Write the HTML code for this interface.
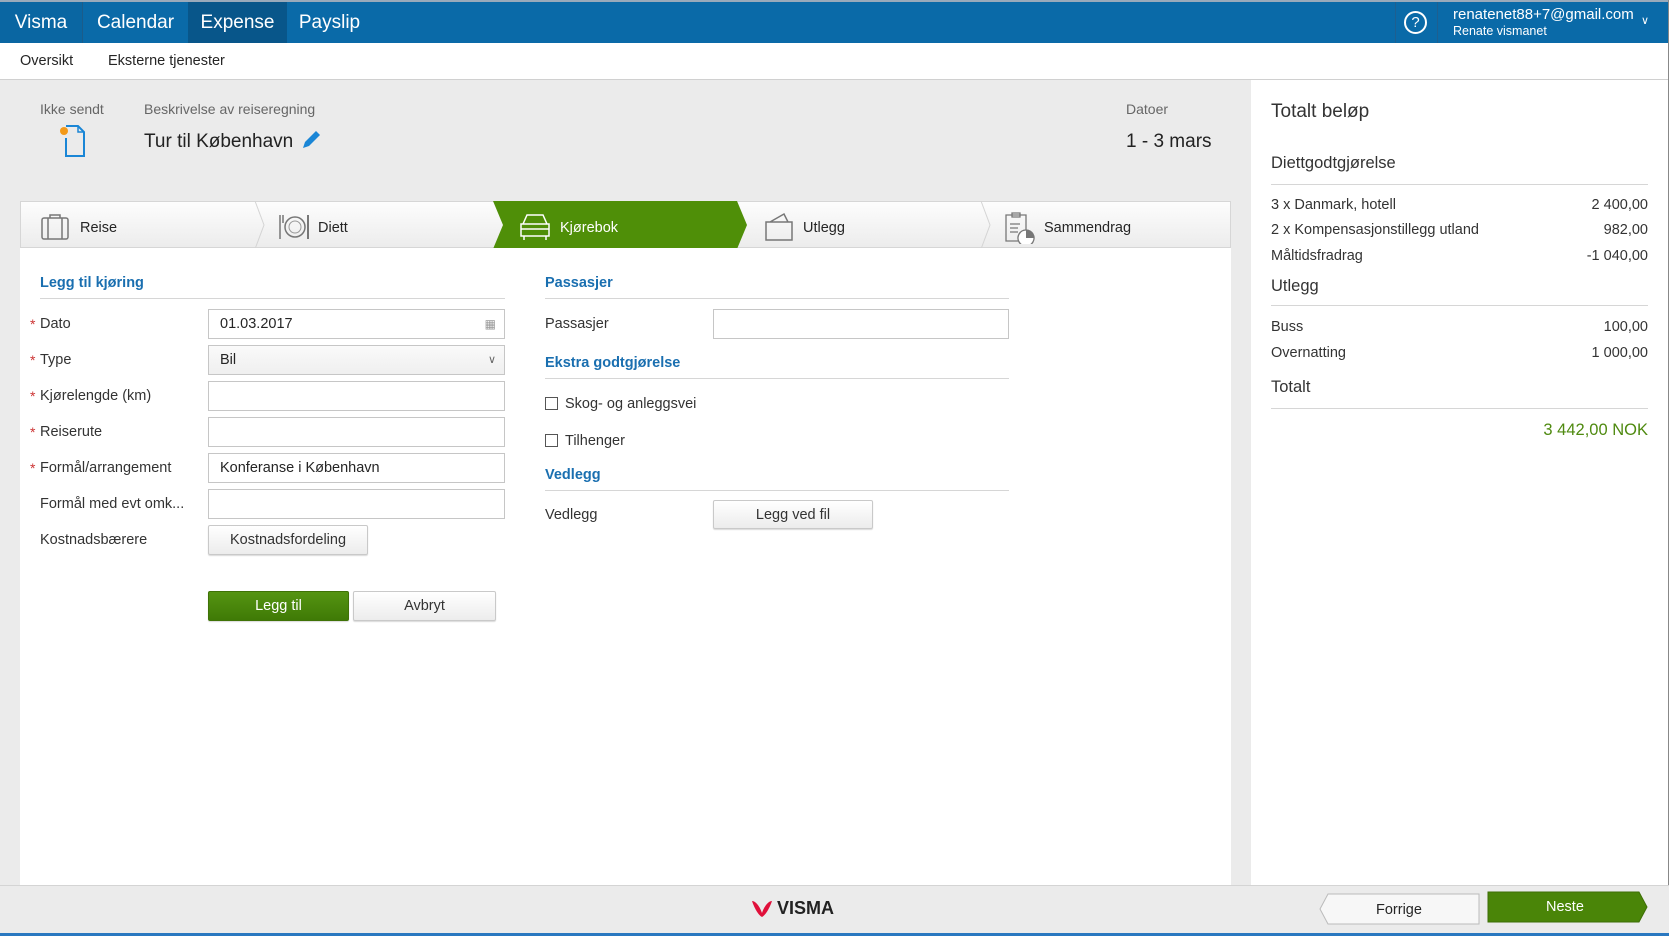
<!DOCTYPE html>
<html><head><meta charset="utf-8"><style>
*{box-sizing:border-box;margin:0;padding:0}
body{width:1669px;height:936px;overflow:hidden;background:#ebebeb;font-family:"Liberation Sans","DejaVu Sans",sans-serif;color:#252525;position:relative;font-size:14px}
.a{position:absolute;white-space:nowrap}
.top{position:absolute;left:0;top:0;width:1669px;height:43px;background:#0a6aa8;border-top:2px solid #9ab}
.top .i{position:absolute;top:0;height:41px;line-height:41px;color:#fff;font-size:19px;text-align:center}
.sub{position:absolute;left:0;top:43px;width:1669px;height:37px;background:#fff;border-bottom:1px solid #d0d0d0}
.lbl{font-size:14.5px;color:#333}
.req{color:#c33;position:absolute;left:30px}
.inp{position:absolute;left:208px;width:297px;height:30px;border:1px solid #c6c6c6;background:#fff;font-size:14.5px;padding-left:11px;line-height:28px}
.h{color:#1a6fb0;font-weight:bold;font-size:14.5px}
.line{position:absolute;height:1px;background:#d6d6d6}
.btn{position:absolute;border:1px solid #c9c9c9;border-radius:2px;background:linear-gradient(#fff,#ececec);text-align:center;font-size:14.5px;color:#333;box-shadow:0 1px 1px rgba(0,0,0,.15)}
.rp{font-size:14.5px;color:#333}
</style></head><body>
<div class="top">
 <div class="i" style="left:0;width:82px;background:#0a66a2">Visma</div>
 <div class="i" style="left:82px;width:106px;border-left:1px solid #1b5c8a">Calendar</div>
 <div class="i" style="left:188px;width:99px;background:#08568a">Expense</div>
 <div class="i" style="left:287px;width:85px">Payslip</div>
 <div style="position:absolute;left:1395px;top:0;width:1px;height:41px;background:#1e5f90"></div>
 <div style="position:absolute;left:1437px;top:0;width:1px;height:41px;background:#1e5f90"></div>
 <div style="position:absolute;left:1404px;top:9px;width:23px;height:23px;border:2px solid #fff;border-radius:50%;color:#fff;font-size:15px;text-align:center;line-height:19px">?</div>
 <div class="a" style="left:1453px;top:4px;color:#fff;font-size:15px">renatenet88+7@gmail.com</div>
 <div class="a" style="left:1453px;top:22px;color:#fff;font-size:12.5px">Renate vismanet</div>
 <div class="a" style="left:1641px;top:12px;color:#fff;font-size:11px">&#8744;</div>
</div>
<div class="sub">
 <div class="a" style="left:20px;top:10px;font-size:14.5px">Oversikt</div>
 <div class="a" style="left:108px;top:10px;font-size:14.5px">Eksterne tjenester</div>
</div>
<div class="a" style="left:40px;top:101px;font-size:14px;color:#666">Ikke sendt</div>
<svg class="a" style="left:58px;top:124px" width="30" height="34"><path d="M8 2h12l6 6v24H8V14" fill="none" stroke="#1a86d6" stroke-width="2"/><path d="M20 2v6h6" fill="none" stroke="#1a86d6" stroke-width="1.5"/><circle cx="6" cy="7" r="4" fill="#f39a1a"/></svg>
<div class="a" style="left:144px;top:101px;font-size:14px;color:#666">Beskrivelse av reiseregning</div>
<div class="a" style="left:144px;top:131px;font-size:19px;color:#222">Tur til København</div>
<svg class="a" style="left:300px;top:129px" width="22" height="22"><path d="M3 19l2-6L16 2l4 4L9 17z" fill="#1a86d6"/></svg>
<div class="a" style="left:1126px;top:101px;font-size:14px;color:#666">Datoer</div>
<div class="a" style="left:1126px;top:131px;font-size:19px;color:#222">1 - 3 mars</div>

<!-- steps -->
<div style="position:absolute;left:20px;top:201px;width:1211px;height:47px;background:linear-gradient(#fdfdfd,#ececec);border:1px solid #d6d6d6"></div>
<svg class="a" style="left:20px;top:201px" width="1211" height="48">
 <path d="M235 0l9 24-9 24" fill="none" stroke="#d4d4d4"/>
 <path d="M961 0l9 24-9 24" fill="none" stroke="#d4d4d4"/>
 <path d="M473 0h244l10 24-10 24H473l10-24z" fill="#4f8f08"/>
</svg>
<svg class="a" style="left:40px;top:213px" width="30" height="28"><rect x="2" y="5" width="26" height="21" rx="2" fill="none" stroke="#777" stroke-width="1.5"/><path d="M10 5V2h10v3M8 5v21M22 5v21" fill="none" stroke="#777" stroke-width="1.5"/></svg>
<div class="a" style="left:80px;top:220px;font-size:14.5px">Reise</div>
<svg class="a" style="left:277px;top:213px" width="34" height="28"><path d="M3 2v24M6 2v8" stroke="#777" stroke-width="1.5"/><circle cx="18" cy="14" r="10" fill="none" stroke="#777" stroke-width="1.5"/><circle cx="18" cy="14" r="6" fill="none" stroke="#999"/><path d="M31 2v24" stroke="#777" stroke-width="2"/></svg>
<div class="a" style="left:318px;top:220px;font-size:14.5px">Diett</div>
<svg class="a" style="left:518px;top:212px" width="34" height="30"><path d="M5 12l4-9h16l4 9M3 12h28v12H3zM6 24v4M28 24v4M3 17h28" fill="none" stroke="#fff" stroke-width="1.5"/></svg>
<div class="a" style="left:560px;top:220px;font-size:14.5px;color:#fff">Kjørebok</div>
<svg class="a" style="left:764px;top:212px" width="30" height="30"><path d="M2 10h26v18H2zM6 10l14-8 4 8" fill="none" stroke="#777" stroke-width="1.5"/></svg>
<div class="a" style="left:803px;top:220px;font-size:14.5px">Utlegg</div>
<svg class="a" style="left:1004px;top:210px" width="34" height="34"><path d="M2 5h20v26H2zM8 3h8v4H8zM6 14h10M6 18h8M6 22h8" fill="none" stroke="#777" stroke-width="1.3"/><path d="M22 20a8 8 0 1 0 0.01 0z" fill="#fff" stroke="#777" stroke-width="1.3"/><path d="M22 20v8h8a8 8 0 0 0-8-8z" fill="#777"/></svg>
<div class="a" style="left:1044px;top:220px;font-size:14.5px">Sammendrag</div>

<!-- main white -->
<div style="position:absolute;left:20px;top:248px;width:1211px;height:637px;background:#fff"></div>
<div class="a h" style="left:40px;top:275px">Legg til kjøring</div>
<div class="line" style="left:40px;top:298px;width:465px"></div>
<span class="a req" style="top:316px">*</span><div class="a lbl" style="left:40px;top:316px">Dato</div>
<div class="inp" style="top:309px">01.03.2017<span style="position:absolute;right:8px;top:0;color:#999;font-size:12px">&#9638;</span></div>
<span class="a req" style="top:352px">*</span><div class="a lbl" style="left:40px;top:352px">Type</div>
<div class="inp" style="top:345px;background:linear-gradient(#fafafa,#efefef)">Bil<span style="position:absolute;right:8px;top:0;color:#666;font-size:11px">&#8744;</span></div>
<span class="a req" style="top:388px">*</span><div class="a lbl" style="left:40px;top:388px">Kjørelengde (km)</div>
<div class="inp" style="top:381px"></div>
<span class="a req" style="top:424px">*</span><div class="a lbl" style="left:40px;top:424px">Reiserute</div>
<div class="inp" style="top:417px"></div>
<span class="a req" style="top:460px">*</span><div class="a lbl" style="left:40px;top:460px">Formål/arrangement</div>
<div class="inp" style="top:453px">Konferanse i København</div>
<div class="a lbl" style="left:40px;top:496px">Formål med evt omk...</div>
<div class="inp" style="top:489px"></div>
<div class="a lbl" style="left:40px;top:532px">Kostnadsbærere</div>
<div class="btn" style="left:208px;top:525px;width:160px;height:30px;line-height:28px">Kostnadsfordeling</div>
<div class="btn" style="left:208px;top:591px;width:141px;height:30px;line-height:29px;background:linear-gradient(#559412,#3f7a06);color:#fff;border-color:#3f7206">Legg til</div>
<div class="btn" style="left:353px;top:591px;width:143px;height:30px;line-height:29px">Avbryt</div>

<div class="a h" style="left:545px;top:275px">Passasjer</div>
<div class="line" style="left:545px;top:298px;width:464px"></div>
<div class="a lbl" style="left:545px;top:316px">Passasjer</div>
<div class="inp" style="left:713px;top:309px;width:296px"></div>
<div class="a h" style="left:545px;top:355px">Ekstra godtgjørelse</div>
<div class="line" style="left:545px;top:378px;width:464px"></div>
<div class="a" style="left:545px;top:397px;width:13px;height:13px;border:1px solid #555"></div>
<div class="a lbl" style="left:565px;top:396px">Skog- og anleggsvei</div>
<div class="a" style="left:545px;top:434px;width:13px;height:13px;border:1px solid #555"></div>
<div class="a lbl" style="left:565px;top:433px">Tilhenger</div>
<div class="a h" style="left:545px;top:467px">Vedlegg</div>
<div class="line" style="left:545px;top:490px;width:464px"></div>
<div class="a lbl" style="left:545px;top:507px">Vedlegg</div>
<div class="btn" style="left:713px;top:500px;width:160px;height:29px;line-height:28px">Legg ved fil</div>

<!-- right panel -->
<div style="position:absolute;left:1251px;top:80px;width:417px;height:805px;background:#fff"></div>
<div class="a" style="left:1271px;top:101px;font-size:19px;color:#333">Totalt beløp</div>
<div class="a" style="left:1271px;top:154px;font-size:16.5px;color:#333">Diettgodtgjørelse</div>
<div class="line" style="left:1271px;top:184px;width:377px"></div>
<div class="a rp" style="left:1271px;top:197px">3 x Danmark, hotell</div><div class="a rp" style="right:21px;top:197px">2 400,00</div>
<div class="a rp" style="left:1271px;top:222px">2 x Kompensasjonstillegg utland</div><div class="a rp" style="right:21px;top:222px">982,00</div>
<div class="a rp" style="left:1271px;top:248px">Måltidsfradrag</div><div class="a rp" style="right:21px;top:248px">-1 040,00</div>
<div class="a" style="left:1271px;top:277px;font-size:16.5px;color:#333">Utlegg</div>
<div class="line" style="left:1271px;top:305px;width:377px"></div>
<div class="a rp" style="left:1271px;top:319px">Buss</div><div class="a rp" style="right:21px;top:319px">100,00</div>
<div class="a rp" style="left:1271px;top:345px">Overnatting</div><div class="a rp" style="right:21px;top:345px">1 000,00</div>
<div class="a" style="left:1271px;top:378px;font-size:16.5px;color:#333">Totalt</div>
<div class="line" style="left:1271px;top:408px;width:377px"></div>
<div class="a" style="right:21px;top:421px;font-size:16.5px;color:#4f8a10">3 442,00 NOK</div>
<div style="position:absolute;left:1668px;top:0;width:1px;height:936px;background:#888"></div>

<!-- footer -->
<div style="position:absolute;left:0;top:885px;width:1669px;height:48px;background:#ebebeb;border-top:1px solid #d4d4d4"></div>
<svg class="a" style="left:750px;top:899px" width="24" height="20"><path d="M2 2c4 0 8 6 10 12 2-6 6-12 10-12-2 6-6 14-10 16C8 16 4 8 2 2z" fill="#e0103a"/></svg>
<div class="a" style="left:777px;top:898px;font-size:18px;font-weight:bold;color:#222">VISMA</div>
<svg class="a" style="left:1318px;top:893px" width="164" height="33"><path d="M10 1h151v30H10L2 16z" fill="#f7f7f7" stroke="#bbb"/></svg>
<div class="a" style="left:1376px;top:902px;font-size:14.5px">Forrige</div>
<svg class="a" style="left:1486px;top:891px" width="164" height="33"><path d="M2 1h151l8 15-8 15H2z" fill="#4a8508" stroke="#3d6e06"/></svg>
<div class="a" style="left:1546px;top:899px;font-size:14.5px;color:#fff">Neste</div>
<div style="position:absolute;left:0;top:933px;width:1669px;height:3px;background:#2a78c0"></div>
</body></html>
